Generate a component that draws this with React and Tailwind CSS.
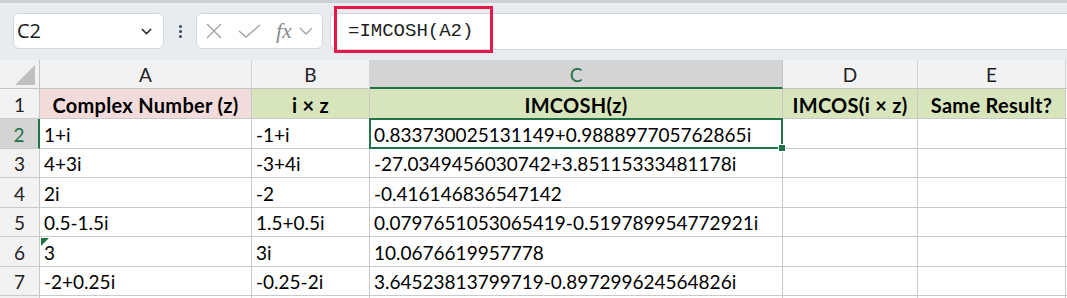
import { ChevronDown } from "lucide-react";

const cols = ["A", "B", "C", "D", "E"];

const rows = [
  ["1+i", "-1+i", "0.833730025131149+0.988897705762865i", "", ""],
  ["4+3i", "-3+4i", "-27.0349456030742+3.85115333481178i", "", ""],
  ["2i", "-2", "-0.416146836547142", "", ""],
  ["0.5-1.5i", "1.5+0.5i", "0.0797651053065419-0.519789954772921i", "", ""],
  ["3", "3i", "10.0676619957778", "", ""],
  ["-2+0.25i", "-0.25-2i", "3.64523813799719-0.897299624564826i", "", ""],
];

const heights = ["h-[30px]", "h-[29px]", "h-[30px]", "h-[29px]", "h-[30px]", "h-[29px]"];

const headers = [
  { text: "Complex Number (z)", fill: "bg-[#f2dcdb]" },
  { text: "i × z", fill: "bg-[#d8e4bc]" },
  { text: "IMCOSH(z)", fill: "bg-[#d8e4bc]" },
  { text: "IMCOS(i × z)", fill: "bg-[#d8e4bc]" },
  { text: "Same Result?", fill: "bg-[#d8e4bc]" },
];

const grid = "grid grid-cols-[40px_212px_118px_413px_135px_148px_1fr]";
const cell = "border-r border-b border-[#c9c9c9] flex items-center pt-[3px]";

export default function App() {
  return (
    <div className="w-[1067px] h-[298px] overflow-hidden bg-white relative" style={{ fontFamily: "Lato, 'Open Sans', sans-serif" }}>
      {/* Toolbar */}
      <div className="h-[3px] bg-[#cdd0d4]" />
      <div className="h-[57px] bg-[#e9ecef] flex items-start pt-[10px] pl-[13px]">
        <div className="w-[151px] h-[36px] bg-white border border-[#d4d6d9] rounded-[6px] flex items-center justify-between pl-[3px] pr-[8px]">
          <span className="text-[20px] text-[#1b1b1b]" style={{ fontFamily: "'Open Sans', sans-serif" }}>C2</span>
          <ChevronDown className="w-[17px] h-[17px] text-[#333]" strokeWidth={2} />
        </div>
        <div className="w-[32px] h-[36px] flex flex-col items-center justify-center gap-[2px]">
          <span className="w-[3px] h-[3px] rounded-full bg-[#38465a]" />
          <span className="w-[3px] h-[3px] rounded-full bg-[#38465a]" />
          <span className="w-[3px] h-[3px] rounded-full bg-[#38465a]" />
        </div>
        <div className="w-[127px] h-[36px] bg-white border border-[#d4d6d9] rounded-[6px] flex items-center pl-[8px] gap-[15px]">
          <svg width="18" height="16" viewBox="0 0 18 16" className="shrink-0">
            <path d="M2 1 L16 15 M16 1 L2 15" stroke="#a3a3a3" strokeWidth="1.4" fill="none" />
          </svg>
          <svg width="23" height="14" viewBox="0 0 23 14" className="shrink-0">
            <path d="M1 7 L8 13 L22 1" stroke="#a3a3a3" strokeWidth="1.4" fill="none" />
          </svg>
          <div className="flex items-center gap-[7px]">
            <span className="text-[22px] italic text-[#8a8a8a] leading-none" style={{ fontFamily: "'Liberation Serif', serif" }}>fx</span>
            <svg width="14" height="8" viewBox="0 0 14 8">
              <path d="M1 1 L7 7 L13 1" stroke="#a3a3a3" strokeWidth="1.4" fill="none" />
            </svg>
          </div>
        </div>
        <div className="flex-1 ml-[7px] h-[37px] bg-white border-y border-l border-[#d4d6d9] rounded-l-[6px] flex items-center pl-[17px]">
          <span className="text-[19px] text-[#1e1e1e]" style={{ fontFamily: "'Liberation Mono', monospace" }}>=IMCOSH(A2)</span>
        </div>
      </div>
      {/* Red annotation box */}
      <div className="absolute left-[334px] top-[6px] w-[159px] h-[47px] border-[3px] border-[#e3194b] pointer-events-none" />

      {/* Sheet */}
      <div className={grid}>
        <div className="h-[29px] bg-[#f2f2f2] border-r border-b border-[#c4c4c4] flex items-end justify-end pr-[4px] pb-[3px]">
          <svg width="20" height="20" viewBox="0 0 20 20">
            <path d="M20 0 L20 20 L0 20 Z" fill="#bfbfbf" />
          </svg>
        </div>
        {cols.map((c) =>
          c === "C" ? (
            <div key={c} className="h-[29px] bg-[#d4d4d4] border-r border-[#c4c4c4] border-b-2 border-b-[#217346] flex items-center justify-center pt-[3px] text-[19px] text-[#217346]">
              {c}
            </div>
          ) : (
            <div key={c} className="h-[29px] bg-[#f2f2f2] border-r border-b border-[#d4d4d4] border-b-[#c4c4c4] flex items-center justify-center pt-[3px] text-[19px] text-[#222]">
              {c}
            </div>
          )
        )}
        <div className="h-[29px] bg-[#f2f2f2] border-b border-[#c4c4c4]" />

        {/* Row 1 */}
        <div className="h-[30px] bg-[#f2f2f2] border-r border-b border-[#c9c9c9] flex items-center justify-center pt-[3px] text-[19px] text-[#222]">1</div>
        {headers.map((h) => (
          <div key={h.text} className={`h-[30px] ${h.fill} ${cell} justify-center font-bold text-[20px] tracking-[0.3px] text-black whitespace-nowrap`}>
            {h.text}
          </div>
        ))}
        <div className="h-[30px] border-b border-[#c9c9c9]" />

        {rows.map((r, i) => {
          const n = i + 2;
          const sel = n === 2;
          return [
            <div
              key={`h${n}`}
              className={
                sel
                  ? `${heights[i]} bg-[#d4d4d4] border-r-2 border-r-[#217346] border-b border-b-[#c9c9c9] flex items-center justify-center pt-[3px] text-[19px] text-[#217346]`
                  : `${heights[i]} bg-[#f2f2f2] border-r border-b border-[#c9c9c9] flex items-center justify-center pt-[3px] text-[19px] text-[#222]`
              }
            >
              {n}
            </div>,
            ...r.map((v, j) => (
              <div key={`${n}-${j}`} className={`${heights[i]} ${cell} relative pl-[4px] text-[19px] text-black whitespace-nowrap ${sel && j === 2 ? "z-10" : ""}`}>
                {v}
                {n === 6 && j === 0 && (
                  <svg width="8" height="8" viewBox="0 0 8 8" className="absolute left-[1px] top-[1px]">
                    <path d="M0 0 L8 0 L0 8 Z" fill="#1e7145" />
                  </svg>
                )}
                {sel && j === 2 && (
                  <div className="absolute left-[-1px] top-[-1px] right-[-1px] bottom-[-1px] border-2 border-[#217346] pointer-events-none">
                    <div className="absolute right-[-5px] bottom-[-5px] w-[8px] h-[8px] bg-[#217346] border border-white" />
                  </div>
                )}
              </div>
            )),
            <div key={`e${n}`} className={`${heights[i]} border-b border-[#c9c9c9]`} />,
          ];
        })}

        {/* Row 8 partial */}
        <div className="h-[10px] bg-[#f2f2f2] border-r border-[#c9c9c9]" />
        {cols.map((c) => (
          <div key={`r8${c}`} className="h-[10px] border-r border-[#c9c9c9]" />
        ))}
        <div className="h-[10px]" />
      </div>
    </div>
  );
}
